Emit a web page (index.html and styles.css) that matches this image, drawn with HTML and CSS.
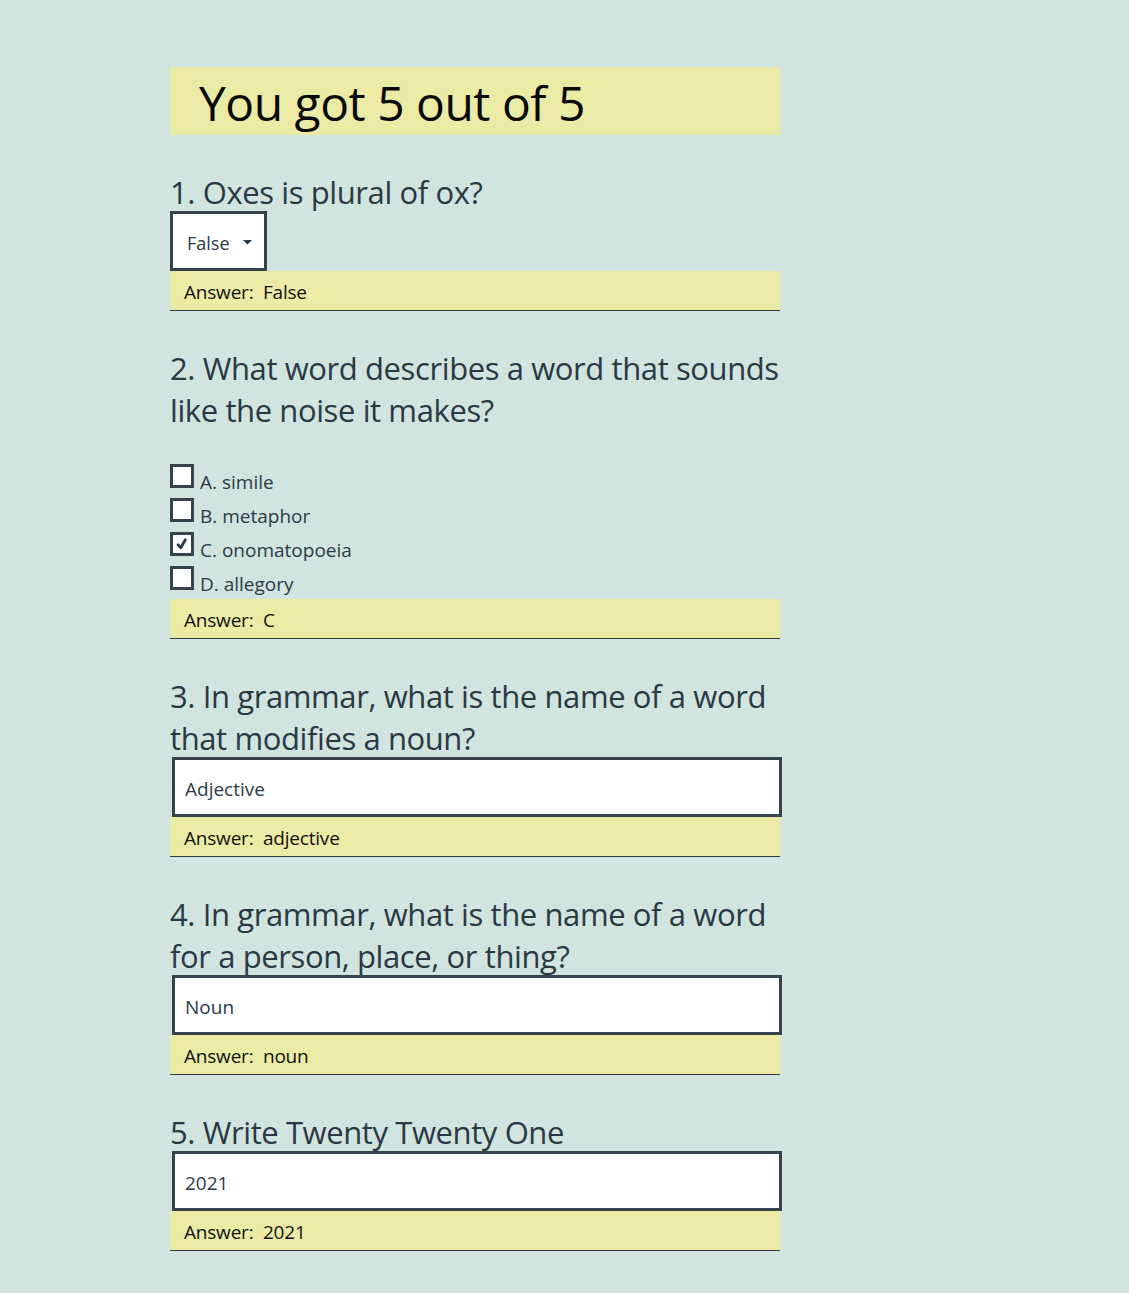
FILE: index.html
```html
<!DOCTYPE html>
<html lang="en">
<head>
<meta charset="utf-8">
<title>Quiz results</title>
<link rel="stylesheet" href="styles.css">
</head>
<body>
<main class="quiz">
  <h1 class="score">You got 5 out of 5</h1>

  <section class="question">
    <h2 class="q-title">1. Oxes is plural of ox?</h2>
    <div class="select">
      <span class="select-value">False</span>
      <svg class="caret" width="9" height="5" viewBox="0 0 9 5"><polygon points="0,0 9,0 4.5,4.5" fill="#2c3a47"/></svg>
    </div>
    <div class="answer">Answer:&nbsp; False</div>
  </section>

  <section class="question">
    <h2 class="q-title">2. What word describes a word that sounds like the noise it makes?</h2>
    <div class="options">
      <div class="opt"><span class="box"></span><span class="opt-label">A. simile</span></div>
      <div class="opt"><span class="box"></span><span class="opt-label">B. metaphor</span></div>
      <div class="opt"><span class="box"><svg width="18" height="18" viewBox="0 0 18 18"><path d="M5 9.8 L7.8 12.8 L12.3 4.8" fill="none" stroke="#2c3a47" stroke-width="2.8" stroke-linecap="round" stroke-linejoin="round"/></svg></span><span class="opt-label">C. onomatopoeia</span></div>
      <div class="opt"><span class="box"></span><span class="opt-label">D. allegory</span></div>
    </div>
    <div class="answer">Answer:&nbsp; C</div>
  </section>

  <section class="question">
    <h2 class="q-title">3. In grammar, what is the name of a word that modifies a noun?</h2>
    <input class="text-input" type="text" value="Adjective" readonly>
    <div class="answer">Answer:&nbsp; adjective</div>
  </section>

  <section class="question">
    <h2 class="q-title">4. In grammar, what is the name of a word for a person, place, or thing?</h2>
    <input class="text-input" type="text" value="Noun" readonly>
    <div class="answer">Answer:&nbsp; noun</div>
  </section>

  <section class="question">
    <h2 class="q-title">5. Write Twenty Twenty One</h2>
    <input class="text-input" type="text" value="2021" readonly>
    <div class="answer">Answer:&nbsp; 2021</div>
  </section>
</main>
</body>
</html>
```

FILE: styles.css
```css
html, body {
  margin: 0;
  padding: 0;
  background: #d1e4df;
}

body {
  font-family: "Open Sans", "Noto Sans", sans-serif;
  color: #2c3a47;
}

.quiz {
  width: 610px;
  margin-left: 170px;
  padding-top: 67px;
  padding-bottom: 40px;
}

.score {
  margin: 0;
  height: 68px;
  box-sizing: border-box;
  padding: 3px 0 0 29px;
  background: #eceba6;
  color: #0a0a0a;
  font-size: 48px;
  font-weight: 400;
  line-height: 65px;
  letter-spacing: -0.5px;
}

.question {
  margin-top: 36px;
}

.q-title {
  margin: 0 0 -2px;
  font-size: 31px;
  font-weight: 400;
  line-height: 42px;
  letter-spacing: -0.4px;
  color: #2b3844;
}

.select {
  position: relative;
  display: flex;
  align-items: center;
  width: 97px;
  height: 60px;
  box-sizing: border-box;
  border: 3px solid #38424d;
  background: #ffffff;
  padding: 3px 0 0 14px;
  font-size: 18px;
  color: #2c3a47;
}

.caret {
  margin-left: 13px;
  margin-top: -1px;
}

.answer {
  height: 40px;
  box-sizing: border-box;
  padding: 4px 0 0 14px;
  background: #eceba6;
  border-bottom: 1px solid #2e3a40;
  font-size: 19px;
  line-height: 35px;
  letter-spacing: -0.2px;
  color: #111111;
}

.options {
  margin-top: 35px;
  margin-bottom: -1px;
}

.opt {
  display: flex;
  align-items: flex-start;
  gap: 6px;
  height: 34px;
}

.box {
  display: flex;
  align-items: center;
  justify-content: center;
  width: 24px;
  height: 24px;
  box-sizing: border-box;
  border: 3px solid #38424d;
  background: #ffffff;
  flex: none;
}

.opt-label {
  margin-top: 6px;
  font-size: 19px;
  line-height: 24px;
  color: #2c3a47;
}

.text-input {
  display: block;
  width: 610px;
  height: 60px;
  box-sizing: border-box;
  margin: 0 0 0 2px;
  padding: 4px 10px 0;
  border: 3px solid #38424d;
  border-radius: 0;
  background: #ffffff;
  outline: none;
  font-family: "Open Sans", "Noto Sans", sans-serif;
  font-size: 19px;
  color: #2c3a47;
}
```
